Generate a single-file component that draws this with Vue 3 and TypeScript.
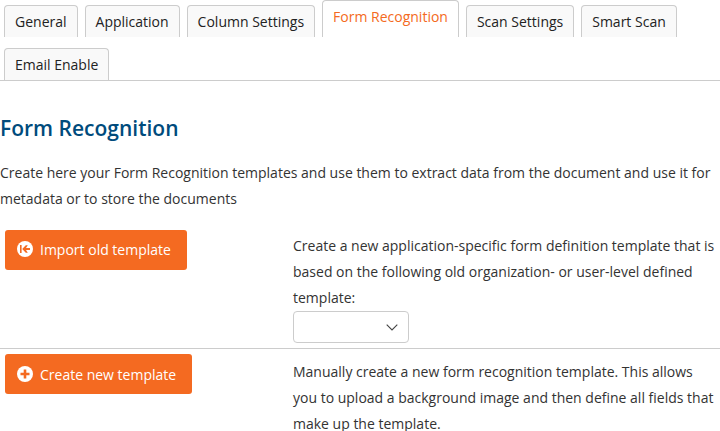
<script setup lang="ts">
const tabs: string[] = ['General', 'Application', 'Column Settings', 'Form Recognition', 'Scan Settings', 'Smart Scan', 'Email Enable']
const activeTab = 'Form Recognition'
</script>

<template>
  <div class="page">
    <ul class="tabs">
      <li v-for="t in tabs" :key="t" class="tab" :class="{ active: t === activeTab }">{{ t }}</li>
    </ul>
    <h1 class="title">Form Recognition</h1>
    <p class="intro">Create here your Form Recognition templates and use them to extract data from the document and use it for metadata or to store the documents</p>
    <section class="row first">
      <div>
        <button class="btn" type="button">
          <svg class="ico" width="16" height="16" viewBox="0 0 16 16">
            <circle cx="8" cy="8" r="8" fill="#fff" />
            <rect x="3" y="4" width="1.6" height="8" fill="#f46a21" />
            <path d="M5.2 8 L8.8 4.2 H10.800 L9 6.900 H13 V9.100 H9 L10.800 11.800 H8.800 Z" fill="#f46a21" />
          </svg>
          Import old template
        </button>
      </div>
      <div class="desc">
        <p>Create a new application-specific form definition template that is based on the following old organization- or user-level defined template:</p>
        <div class="select">
          <svg width="12" height="7" viewBox="0 0 12 7"><path d="M.7.7 6 6l5.3-5.3" fill="none" stroke="#444" stroke-width="1.1" /></svg>
        </div>
      </div>
    </section>
    <section class="row second">
      <div>
        <button class="btn" type="button">
          <svg class="ico" width="16" height="16" viewBox="0 0 16 16">
            <circle cx="8" cy="8" r="8" fill="#fff" />
            <path d="M6.7 3.500h2.600v3.200h3.200v2.600H9.300v3.200H6.700V9.300H3.500V6.700h3.200Z" fill="#f46a21" />
          </svg>
          Create new template
        </button>
      </div>
      <div class="desc">
        <p>Manually create a new form recognition template. This allows you to upload a background image and then define all fields that make up the template.</p>
      </div>
    </section>
  </div>
</template>

<style>
html, body { margin: 0; background: #fff; overflow: hidden; }
</style>

<style scoped>
.page {
  width: 720px;
  height: 431px;
  overflow: hidden;
  font-family: "Open Sans", sans-serif;
  font-size: 14px;
  color: #333;
}
.tabs {
  list-style: none;
  margin: 0;
  padding: 0 0 0 4px;
  display: flex;
  flex-wrap: wrap;
  align-items: flex-end;
  column-gap: 7px;
  row-gap: 11px;
  border-bottom: 1px solid #ccc;
}
.tab {
  box-sizing: border-box;
  height: 32px;
  padding: 0 10px;
  line-height: 32px;
  background: #f9f9f9;
  border: 1px solid #ccc;
  border-bottom: 0;
  border-radius: 4px 4px 0 0;
  color: #222;
}
.tab.active {
  height: 37px;
  padding-bottom: 5px;
  background: #fff;
  color: #f46a21;
}
.title {
  margin: 32px 0 0 0;
  font-size: 21px;
  line-height: 30px;
  font-weight: 600;
  color: #004b7c;
}
.intro {
  margin: 17px 0 0 0;
  line-height: 26px;
}
.row {
  display: grid;
  grid-template-columns: 293px 1fr;
}
.first { margin-top: 18px; padding-bottom: 5px; border-bottom: 1px solid #ccc; }
.second { padding-top: 5px; }
.btn {
  margin-left: 5px;
  height: 40px;
  padding: 0 16px 0 12px;
  display: inline-flex;
  align-items: center;
  gap: 7px;
  background: #f46a21;
  color: #fff;
  border: 0;
  border-radius: 3px;
  font: inherit;
  white-space: nowrap;
}
.first .btn { padding-bottom: 2px; }
.ico { flex: none; }
.desc p { margin: 0; line-height: 26px; width: 425px; }
.first .desc p { margin-top: 3px; }
.second .desc p { margin-top: 5px; }
.select {
  box-sizing: border-box;
  width: 116px;
  height: 32px;
  margin-top: 0;
  padding-right: 10px;
  display: flex;
  align-items: center;
  justify-content: flex-end;
  border: 1px solid #ccc;
  border-radius: 4px;
  background: #fff;
}
</style>
